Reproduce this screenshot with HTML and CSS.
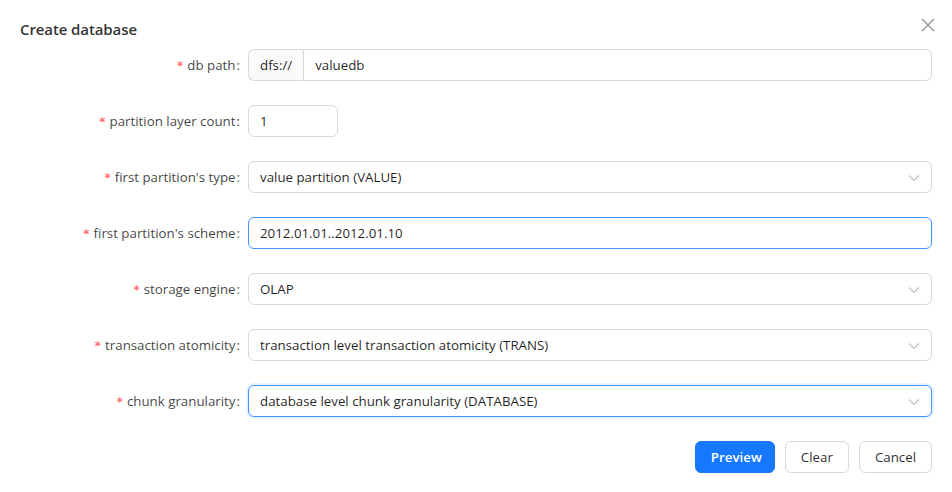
FILE: index.html
```html
<!DOCTYPE html>
<html>
<head>
<meta charset="utf-8">
<link rel="stylesheet" href="styles.css">
</head>
<body>
<div class="modal">
  <div class="header">
    <div class="title">Create database</div>
    <button class="close" aria-label="close">
      <svg width="14" height="14" viewBox="0 0 14 14"><path d="M1 1L13 13M13 1L1 13" stroke="#8c8c8c" stroke-width="1.2" fill="none"/></svg>
    </button>
  </div>
  <form class="form">
    <div class="row">
      <label class="label"><span class="req">*</span>db path</label>
      <div class="control group">
        <span class="addon">dfs://</span>
        <span class="input grow">valuedb</span>
      </div>
    </div>
    <div class="row">
      <label class="label"><span class="req">*</span>partition layer count</label>
      <div class="control"><span class="input small">1</span></div>
    </div>
    <div class="row">
      <label class="label"><span class="req">*</span>first partition's type</label>
      <div class="control"><span class="input select">value partition (VALUE)<svg class="arrow" viewBox="0 0 12 12"><path d="M1 3.5L6 8.5L11 3.5" stroke="#bfbfbf" stroke-width="1.1" fill="none"/></svg></span></div>
    </div>
    <div class="row">
      <label class="label"><span class="req">*</span>first partition's scheme</label>
      <div class="control"><span class="input focus">2012.01.01..2012.01.10</span></div>
    </div>
    <div class="row">
      <label class="label"><span class="req">*</span>storage engine</label>
      <div class="control"><span class="input select">OLAP<svg class="arrow" viewBox="0 0 12 12"><path d="M1 3.5L6 8.5L11 3.5" stroke="#bfbfbf" stroke-width="1.1" fill="none"/></svg></span></div>
    </div>
    <div class="row">
      <label class="label"><span class="req">*</span>transaction atomicity</label>
      <div class="control"><span class="input select">transaction level transaction atomicity (TRANS)<svg class="arrow" viewBox="0 0 12 12"><path d="M1 3.5L6 8.5L11 3.5" stroke="#bfbfbf" stroke-width="1.1" fill="none"/></svg></span></div>
    </div>
    <div class="row">
      <label class="label"><span class="req">*</span>chunk granularity</label>
      <div class="control"><span class="input select focus shadow">database level chunk granularity (DATABASE)<svg class="arrow" viewBox="0 0 12 12"><path d="M1 3.5L6 8.5L11 3.5" stroke="#bfbfbf" stroke-width="1.1" fill="none"/></svg></span></div>
    </div>
    <div class="actions">
      <button type="button" class="btn primary">Preview</button>
      <button type="button" class="btn">Clear</button>
      <button type="button" class="btn">Cancel</button>
    </div>
  </form>
</div>
</body>
</html>
```
FILE: styles.css
```css
* { box-sizing: border-box; }
html, body { margin: 0; padding: 0; background: #fff; }
body {
  font-family: "Open Sans", "Noto Sans", sans-serif;
  font-size: 13.3px;
  color: rgba(0,0,0,0.88);
  width: 952px;
  height: 492px;
  overflow: hidden;
}
.modal { padding: 17px 20px 0 20px; }
.header { display: flex; justify-content: space-between; align-items: center; height: 24px; }
.title { font-size: 15px; font-weight: 600; color: rgba(0,0,0,0.82); letter-spacing: -0.1px; }
.close { border: 0; background: none; padding: 0; margin-right: -4px; width: 16px; height: 16px; display: flex; align-items: center; justify-content: center; margin-top: -8px; }
.form { margin-top: 8px; }
.row { display: grid; grid-template-columns: 228px 1fr; height: 32px; margin-bottom: 24px; align-items: center; }
.label { text-align: right; white-space: nowrap; color: rgba(0,0,0,0.75); }
.label::after { content: ":"; margin: 0 8px 0 1px; }
.req { color: #ff4d4f; margin-right: 4px; font-family: "DejaVu Sans", sans-serif; font-size: 13px; }
.control { display: flex; }
.group { width: 100%; }
.input {
  display: flex; align-items: center; position: relative;
  height: 32px; width: 100%;
  border: 1px solid #d9d9d9; border-radius: 6px;
  padding: 0 11px; background: #fff;
}
.input.grow { border-radius: 0 6px 6px 0; }
.addon {
  display: flex; align-items: center; height: 32px;
  padding: 0 11px; background: #fafafa;
  border: 1px solid #d9d9d9; border-right: 0; border-radius: 6px 0 0 6px;
  width: 56px;
}
.input.small { width: 90px; }
.input.focus { border-color: #4096ff; }
.input.shadow { box-shadow: 0 0 0 2px rgba(5,145,255,0.1); }
.arrow { position: absolute; right: 11px; top: 10px; width: 12px; height: 12px; }
.actions { display: flex; justify-content: flex-end; gap: 10px; margin-top: 0; }
.btn {
  height: 32px; padding: 0 15px; border-radius: 6px;
  border: 1px solid #d9d9d9; background: #fff;
  font-family: inherit; font-size: 13.3px; color: rgba(0,0,0,0.85);
}
.btn.primary { background: #1677ff; border-color: #1677ff; color: #fff; font-weight: 600; width: 80px; }
```
